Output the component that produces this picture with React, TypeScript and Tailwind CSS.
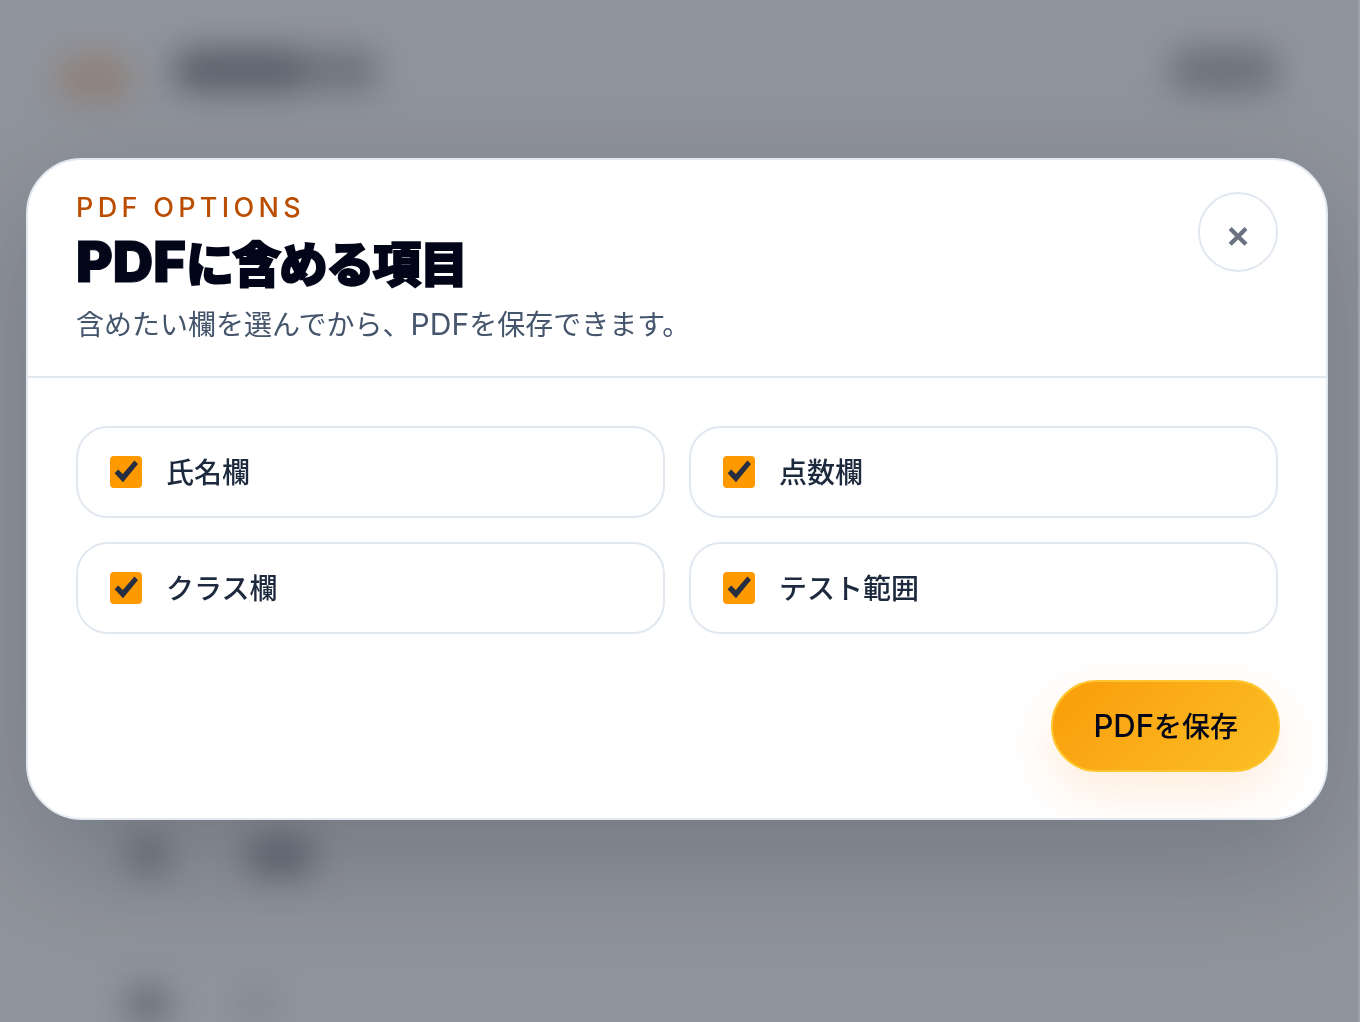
import React from "react";

const OPTIONS = [
  { id: "name", label: "氏名欄" },
  { id: "score", label: "点数欄" },
  { id: "class", label: "クラス欄" },
  { id: "range", label: "テスト範囲" },
];

function Option({ id, label }: { id: string; label: string }) {
  return (
    <label
      htmlFor={id}
      className="flex h-[92px] items-center gap-6 rounded-[32px] border-2 border-slate-200 px-8 text-[28px] leading-10 font-medium text-slate-800"
    >
      <span className="relative size-8 shrink-0">
        <input
          id={id}
          type="checkbox"
          defaultChecked
          className="peer block size-8 appearance-none rounded-[4px] border-2 border-slate-400 bg-white checked:border-0 checked:bg-[#ff9900]"
        />
        <svg
          viewBox="0 0 32 32"
          className="pointer-events-none absolute inset-0 hidden size-8 peer-checked:block"
          fill="#262f42"
          aria-hidden="true"
        >
          <path d="M4.6 17.2 L8.2 13.6 L12.8 18 L24.4 4.6 L28 8 L13 26.2 Z" />
        </svg>
      </span>
      <span className="pt-0.5">{label}</span>
    </label>
  );
}

/* Soft page silhouette behind the overlay */
function Backdrop() {
  return (
    <div aria-hidden="true" className="flex h-screen flex-col justify-between overflow-hidden bg-[#90949c]">
      <div className="flex items-start justify-between pt-12 pr-20 pl-14">
        <div className="flex items-start gap-10">
          <div className="mt-2 h-11 w-19 rounded-full bg-[#8e8078] blur-[16px]" />
          <div className="flex items-center blur-[16px]">
            <div className="h-11 w-32 rounded-l-full bg-[#5b616c]" />
            <div className="h-10 w-20 rounded-r-full bg-[#6c717b]" />
          </div>
        </div>
        <div className="h-11 w-28 rounded-full bg-[#6b707a] blur-[16px]" />
      </div>
      <div className="flex flex-col gap-27 pl-31">
        <div className="flex gap-18">
          <div className="h-11 w-12 rounded-full bg-[#71767f] blur-[16px]" />
          <div className="h-11 w-18 rounded-full bg-[#686d77] blur-[16px]" />
        </div>
        <div className="flex gap-16">
          <div className="h-9 w-12 rounded-full bg-[#666c77] blur-[16px]" />
          <div className="h-9 w-10 rounded-full bg-[#82868f] blur-[16px]" />
        </div>
      </div>
    </div>
  );
}

export default function App() {
  return (
    <div className="font-['Inter','Noto_Sans_CJK_JP',sans-serif]">
      <Backdrop />
      <div className="fixed inset-0 overflow-hidden border-r-2 border-[#9da1a9] pt-[158px] pr-[30px] pl-[26px]">
        <section
          role="dialog"
          aria-modal="true"
          aria-labelledby="dialog-title"
          className="overflow-hidden rounded-[56px] border-2 border-slate-200 bg-white shadow-[0_40px_120px_rgba(15,23,42,0.22)]"
        >
          <header className="flex items-start justify-between border-b-2 border-slate-200 px-12 py-8">
            <div>
              <p className="text-[27px] leading-8 font-medium tracking-[0.16em] text-amber-700">PDF OPTIONS</p>
              <h2
                id="dialog-title"
                className="mt-1.5 text-[48px] leading-16 font-black tracking-tight text-slate-950 [-webkit-text-stroke:2px_currentColor]"
              >
                <span className="text-[56px] tracking-normal [-webkit-text-stroke:1px_currentColor]">PDF</span>に含める項目
              </h2>
              <p className="mt-2 text-[28px] leading-[38px] text-slate-600">
                含めたい欄を選んでから、<span className="text-[30px]">PDF</span>を保存できます。
              </p>
            </div>
            <button
              type="button"
              aria-label="閉じる"
              className="flex size-20 items-center justify-center rounded-full border-2 border-slate-200 pt-0.5 text-[38px] leading-10 font-semibold text-gray-500"
            >
              ×
            </button>
          </header>
          <div className="px-12 pt-12 pb-[46px]">
            <div className="grid grid-cols-2 gap-6">
              {OPTIONS.map((o) => (
                <Option key={o.id} id={o.id} label={o.label} />
              ))}
            </div>
            <div className="mt-[46px] -mr-0.5 flex justify-end">
              <button
                type="button"
                className="h-[92px] rounded-full border-2 border-[#fec52e] bg-linear-135 from-[#f99c07] to-[#fbbf24] bg-origin-border px-10 text-[28px] leading-10 font-medium text-slate-950 shadow-[0_20px_50px_rgba(245,130,11,0.15)]"
              >
                <span className="text-[31px]">PDF</span>を保存
              </button>
            </div>
          </div>
        </section>
      </div>
    </div>
  );
}
